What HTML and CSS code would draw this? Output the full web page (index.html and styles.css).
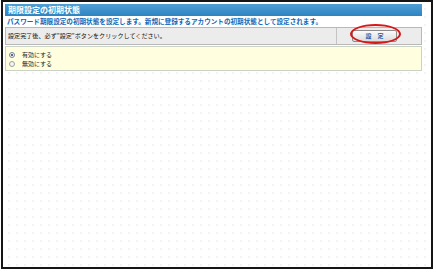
FILE: index.html
```html
<!DOCTYPE html>
<html lang="ja">
<head>
<meta charset="utf-8">
<link rel="stylesheet" href="styles.css">
</head>
<body>
<div class="frame">
  <div class="panel">
    <div class="title">期限設定の初期状態</div>
    <div class="desc">パスワード期限設定の初期状態を設定します。新規に登録するアカウントの初期状態として設定されます。</div>
    <div class="bar">
      <div class="bar-text">設定完了後、必ず"設定"ボタンをクリックしてください。</div>
      <div class="bar-action">
        <span class="btn">設　定</span>
        <span class="ring"></span>
      </div>
    </div>
    <div class="options">
      <div class="opt"><span class="radio checked"></span><span class="lbl">有効にする</span></div>
      <div class="opt"><span class="radio"></span><span class="lbl">無効にする</span></div>
    </div>
  </div>
</div>
</body>
</html>
```
FILE: styles.css
```css
html, body {
  margin: 0;
  padding: 0;
  background: #fff;
}
body {
  font-family: "Noto Sans CJK JP", "Noto Sans", sans-serif;
  width: 436px;
  height: 273px;
  overflow: hidden;
}
.frame {
  box-sizing: border-box;
  margin: 0 3px 0 1px;
  width: 432px;
  height: 269px;
  border: 2px solid #151515;
  padding: 2px 9px 0 2px;
  background-color: #fff;
  background-image: radial-gradient(circle, #f4f4f4 0.8px, transparent 1.2px);
  background-size: 8px 8px;
  background-position: 2px 3px;
}
.panel {
  width: 417px;
}
.title {
  height: 12px;
  background: linear-gradient(#4f9fd4, #2d84c1);
  color: #fff;
  font-weight: bold;
  font-size: 8px;
  line-height: 12px;
  padding-left: 3px;
  white-space: nowrap;
}
.desc {
  color: #0f68b8;
  font-weight: bold;
  font-size: 6.6px;
  line-height: 11px;
  padding-left: 2px;
  white-space: nowrap;
  background: #fff;
}
.bar {
  display: flex;
  height: 16px;
  border: 1px solid #b8b8b8;
  background: #ececec;
}
.bar-text {
  flex: 1;
  font-size: 6.1px;
  line-height: 16px;
  padding-left: 2px;
  color: #111;
  white-space: nowrap;
  border-right: 1px solid #c4c4c4;
}
.bar-action {
  position: relative;
  width: 84px;
  display: flex;
  align-items: center;
  padding-left: 15px;
  box-sizing: border-box;
}
.btn {
  display: block;
  width: 45px;
  height: 12px;
  box-sizing: border-box;
  border: 1px solid #8c8c8c;
  border-radius: 2px;
  background: linear-gradient(#fafafa, #dcdcdc);
  color: #2a5fa8;
  font-weight: bold;
  font-size: 6px;
  line-height: 10px;
  text-align: center;
}
.ring {
  position: absolute;
  left: 13px;
  top: -4px;
  width: 51px;
  height: 20px;
  box-sizing: border-box;
  border: 2px solid #d81818;
  border-radius: 50%;
}
.options {
  margin-top: 1px;
  height: 25px;
  box-sizing: border-box;
  border: 1px solid #c9d2c4;
  background: #ffffe0;
  padding: 3px 0 0 3px;
}
.opt {
  display: flex;
  align-items: center;
  height: 9px;
}
.radio {
  width: 6px;
  height: 6px;
  box-sizing: border-box;
  border-radius: 50%;
  border: 1px solid #9aa0a8;
  background: #f4f4f4;
  position: relative;
}
.radio.checked {
  border-color: #7a8496;
}
.radio.checked::after {
  content: "";
  position: absolute;
  left: 1px;
  top: 1px;
  width: 2px;
  height: 2px;
  border-radius: 50%;
  background: #1d3f7a;
}
.lbl {
  margin-left: 7px;
  font-size: 6px;
  color: #222;
  white-space: nowrap;
}
```
